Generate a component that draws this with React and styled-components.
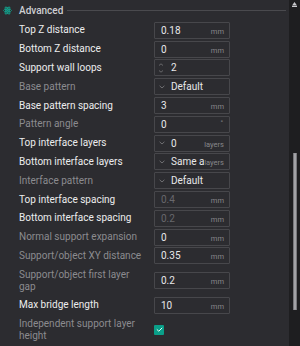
import React from "react";
import styled, { createGlobalStyle } from "styled-components";

const GlobalStyle = createGlobalStyle`
  html, body { margin: 0; padding: 0; background: #1e1e20; }
  body { font-family: Roboto, "Liberation Sans", sans-serif; }
`;

const Page = styled.div`
  display: flex;
  width: 300px;
  height: 346px;
  overflow: hidden;
`;

const Panel = styled.div`
  flex: 1;
  background: #2c2c30;
  display: flex;
  flex-direction: column;
`;

const Header = styled.div`
  display: flex;
  align-items: center;
  height: 21px;
  padding-left: 3px;
  padding-right: 3px;
`;

const HeaderTitle = styled.span`
  margin-left: 7px;
  font-size: 10px;
  font-weight: 500;
  color: #cfcfd2;
`;

const HeaderLine = styled.div`
  flex: 1;
  height: 1px;
  margin-left: 4px;
  background: #4a4a4e;
`;

const Row = styled.div`
  display: grid;
  grid-template-columns: 135px 76px;
  align-items: center;
  padding-left: 19px;
  height: ${(p) => (p.$tall ? "30.4px" : "18.8px")};
`;

const Label = styled.div`
  font-size: 10px;
  line-height: 12px;
  color: ${(p) => (p.$dim ? "#8b8b8f" : "#ececee")};
`;

const Field = styled.div`
  box-sizing: border-box;
  height: 17px;
  border: 1px solid #47474b;
  border-radius: 1px;
  display: flex;
  align-items: center;
  padding: 0 5px 0 ${(p) => (p.$icon ? "3px" : "6px")};
  overflow: hidden;
`;

const Value = styled.span`
  flex: 1;
  min-width: 0;
  overflow: hidden;
  white-space: nowrap;
  font-size: 10px;
  color: ${(p) => (p.$dim ? "#68686c" : "#e8e8ea")};
`;

const Unit = styled.span`
  align-self: flex-end;
  margin-bottom: 1px;
  font-size: 7.5px;
  line-height: 10px;
  color: #86868a;
  white-space: nowrap;
`;

const Degree = styled.span`
  align-self: flex-start;
  margin-top: 2px;
  margin-right: 1px;
  font-size: 7px;
  color: #86868a;
`;

const IconSlot = styled.svg`
  flex: none;
  margin-right: 7px;
`;

const Check = styled.div`
  box-sizing: border-box;
  width: 10px;
  height: 10px;
  border-radius: 1px;
  background: #0a9f89;
  display: flex;
  align-items: center;
  justify-content: center;
`;

const ScrollTrack = styled.div`
  width: 11px;
  background: #1e1e20;
  display: flex;
  flex-direction: column;
`;

const ScrollArrow = styled.svg`
  margin: 2px 0 0 3px;
  display: block;
`;

const ScrollThumb = styled.div`
  margin: 146px 0 0 4px;
  width: 4px;
  height: 157px;
  border-radius: 1px;
  background: #a2a2a6;
  box-shadow: inset 1px 0 0 #77777b, inset -1px 0 0 #77777b;
`;

const Spinner = () => (
  <IconSlot width="6" height="10" viewBox="0 0 6 10">
    <path d="M1 2.5 L3 0.8 L5 2.5" fill="none" stroke="#6f6f73" strokeWidth="0.9" />
    <path d="M1 7.5 L3 9.2 L5 7.5" fill="none" stroke="#6f6f73" strokeWidth="0.9" />
  </IconSlot>
);

const Chevron = () => (
  <IconSlot width="6" height="4" viewBox="0 0 6 4" style={{ marginLeft: 1, marginRight: 6 }}>
    <path d="M0.6 0.8 L3 3 L5.4 0.8" fill="none" stroke="#77777b" strokeWidth="0.9" />
  </IconSlot>
);

const AtomIcon = () => (
  <svg width="9" height="9" viewBox="0 0 10 10">
    <g fill="none" stroke="#13a08c" strokeWidth="1">
      <ellipse cx="5" cy="5" rx="4.4" ry="1.6" />
      <ellipse cx="5" cy="5" rx="4.4" ry="1.6" transform="rotate(60 5 5)" />
      <ellipse cx="5" cy="5" rx="4.4" ry="1.6" transform="rotate(-60 5 5)" />
    </g>
    <circle cx="5" cy="5" r="1" fill="#13a08c" />
  </svg>
);

const rows = [
  { label: "Top Z distance", value: "0.18", unit: "mm" },
  { label: "Bottom Z distance", value: "0", unit: "mm" },
  { label: "Support wall loops", value: "2", kind: "spin" },
  { label: "Base pattern", dim: true, value: "Default", kind: "drop" },
  { label: "Base pattern spacing", value: "3", unit: "mm" },
  { label: "Pattern angle", dim: true, value: "0", degree: true },
  { label: "Top interface layers", value: "0", unit: "layers", kind: "drop" },
  { label: "Bottom interface layers", value: "Same as", unit: "layers", kind: "drop" },
  { label: "Interface pattern", dim: true, value: "Default", kind: "drop" },
  { label: "Top interface spacing", value: "0.4", unit: "mm", valueDim: true },
  { label: "Bottom interface spacing", value: "0.2", unit: "mm", valueDim: true },
  { label: "Normal support expansion", dim: true, value: "0", unit: "mm" },
  { label: "Support/object XY distance", dim: true, value: "0.35", unit: "mm" },
  { label: ["Support/object first layer", "gap"], dim: true, value: "0.2", unit: "mm" },
  { label: "Max bridge length", value: "10", unit: "mm" },
  { label: ["Independent support layer", "height"], dim: true, kind: "check" },
];

export default function App() {
  return (
    <>
      <GlobalStyle />
      <Page>
        <Panel>
          <Header>
            <AtomIcon />
            <HeaderTitle>Advanced</HeaderTitle>
            <HeaderLine />
          </Header>
          {rows.map((r, i) => {
            const tall = Array.isArray(r.label);
            return (
              <Row key={i} $tall={tall}>
                <Label $dim={r.dim}>
                  {tall ? (
                    <>
                      {r.label[0]}
                      <br />
                      {r.label[1]}
                    </>
                  ) : (
                    r.label
                  )}
                </Label>
                {r.kind === "check" ? (
                  <Check>
                    <svg width="7" height="5" viewBox="0 0 7 5">
                      <path d="M0.8 2.4 L2.8 4.2 L6.2 0.8" fill="none" stroke="#e8fff8" strokeWidth="1" />
                    </svg>
                  </Check>
                ) : (
                  <Field $icon={r.kind === "spin" || r.kind === "drop"}>
                    {r.kind === "spin" && <Spinner />}
                    {r.kind === "drop" && <Chevron />}
                    <Value $dim={r.valueDim}>{r.value}</Value>
                    {r.unit && <Unit>{r.unit}</Unit>}
                    {r.degree && <Degree>°</Degree>}
                  </Field>
                )}
              </Row>
            );
          })}
        </Panel>
        <ScrollTrack>
          <ScrollArrow width="5" height="5" viewBox="0 0 5 5">
            <path d="M2.5 0 L5 3.5 L0 3.5 Z" fill="#c8c8cc" />
            <rect x="0" y="4" width="5" height="1" fill="#c8c8cc" />
          </ScrollArrow>
          <ScrollThumb />
        </ScrollTrack>
      </Page>
    </>
  );
}
